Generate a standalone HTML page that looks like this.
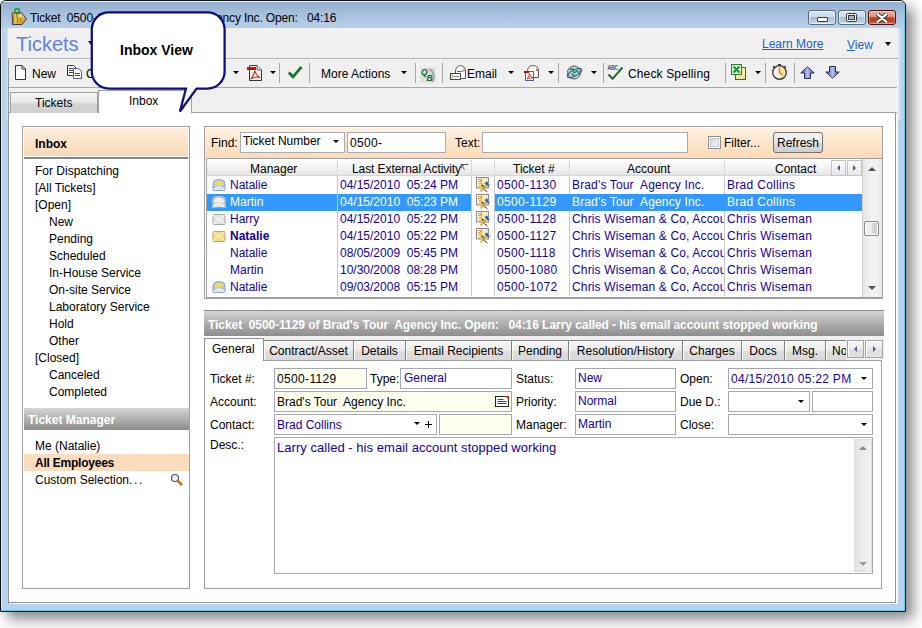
<!DOCTYPE html>
<html><head><meta charset="utf-8">
<style>
*{box-sizing:border-box;margin:0;padding:0}
html,body{width:922px;height:628px;overflow:hidden;background:#fff}
body{position:relative;font-family:"Liberation Sans",sans-serif;font-size:12px;color:#000}
.a{position:absolute}
svg{display:block}
.t{position:absolute;white-space:nowrap;line-height:14px}
#win{left:0;top:0;width:906px;height:612px;background:#b9d1ea;border:1px solid #101010;border-radius:6px 6px 0 0;overflow:hidden;box-shadow:7px 7px 14px rgba(0,0,0,.48)}
#title{left:0;top:0;width:904px;height:27px;border-top:1px solid #f4f8fc;background:linear-gradient(#94afcf,#a6bfdc 45%,#b9d0e9)}
#content{left:8px;top:28px;width:890px;height:576px;background:#fff;border-left:1px solid #8e969e;}
.hdr{left:8px;top:28px;width:890px;height:31px;background:#f0f0f0;border-bottom:1px solid #b4b4b4}
.tb{left:9px;top:59px;width:888px;height:29px;background:#f0f0f0;border-bottom:1px solid #a8a8a8}
.tabrow{left:9px;top:88px;width:888px;height:25px;background:#f0f0f0;border-bottom:1px solid #a0a0a0}
.sep{position:absolute;width:1px;height:20px;top:63px;background:#a9a9a9;border-right:1px solid #fff}
.dd{position:absolute;width:0;height:0;border-left:3px solid transparent;border-right:3px solid transparent;border-top:3px solid #000}
.blue{color:#19198c}
.box{position:absolute;border:1px solid #a0a0a0;background:#fff}
.field{position:absolute;border:1px solid #a5acb5;background:#fff;height:21px}
.yel{background:#fffff0}
</style></head><body>
<div id="win" class="a">
  <div id="title" class="a"></div>
  <div class="a" style="right:0;top:4px;width:1px;height:606px;background:#5cd0f0"></div>
  <div class="a" style="left:0;bottom:0;width:904px;height:1px;background:#5cd0f0"></div>
  <div class="a" style="left:0;top:27px;width:1px;height:580px;background:#dde9f5"></div>
  <div class="a" style="left:897px;top:27px;width:3px;height:92px;background:linear-gradient(90deg,rgba(255,255,255,.5),rgba(255,255,255,.15))"></div>
  <div class="a" style="left:3px;top:27px;width:4px;height:92px;background:linear-gradient(90deg,rgba(255,255,255,0),rgba(255,255,255,.35))"></div>
</div>
<!-- title -->
<div class="a" style="left:10px;top:7px;width:18px;height:19px">
<svg width="18" height="19" viewBox="0 0 18 19"><defs><linearGradient id="gld" x1="0" x2="1" y1="0" y2="1"><stop offset="0" stop-color="#f8e070"/><stop offset=".5" stop-color="#e8c040"/><stop offset="1" stop-color="#b88a18"/></linearGradient></defs>
<path d="M2 6 L11.5 5.5 L16.5 12 L12 17.5 L2.5 17.5 Z" fill="url(#gld)" stroke="#3a3a50" stroke-width="1"/>
<path d="M4 7 L3.5 16 M6.5 6.5 L8 16 M9 6 L11 15" stroke="#9a7010" stroke-width="1.1"/>
<circle cx="10" cy="9" r="1.3" fill="#fff"/>
<circle cx="7" cy="4" r="2.3" fill="none" stroke="#1a9a2a" stroke-width="1.6"/></svg>
</div>
<div class="t" style="left:30px;top:11px;font-size:12px;letter-spacing:-0.17px;color:#000">Ticket&nbsp; 0500-1129 of Brad's Tour&nbsp; Agency Inc. Open:&nbsp;&nbsp; 04:16</div>
<!-- window buttons -->
<div class="a" style="left:808px;top:10px;width:28px;height:15px;border:1px solid #5c6a7e;border-radius:3px;background:linear-gradient(#dbe6f2,#ccdaea 45%,#a9bfd8 50%,#b8cce2 80%,#cfe0f0);box-shadow:inset 0 0 0 1px rgba(255,255,255,.55)"><div class="a" style="left:8px;top:6px;width:11px;height:5px;border:1px solid #3a3a3a;border-radius:1px;background:#fff"></div></div>
<div class="a" style="left:838px;top:10px;width:28px;height:15px;border:1px solid #5c6a7e;border-radius:3px;background:linear-gradient(#dbe6f2,#ccdaea 45%,#a9bfd8 50%,#b8cce2 80%,#cfe0f0);box-shadow:inset 0 0 0 1px rgba(255,255,255,.55)"><div class="a" style="left:7px;top:2px;width:11px;height:9px;border:1px solid #3a3a3a;border-radius:1.5px;background:#fafafa"><div class="a" style="left:1px;top:1px;width:7px;height:5px;border:1px solid #3a3a3a;background:#9fb4cc"></div></div></div>
<div class="a" style="left:868px;top:10px;width:28px;height:15px;border:1px solid #4a0f10;border-radius:3px;background:linear-gradient(#eab0a0,#e09080 45%,#c84a28 50%,#b83818 75%,#d87050);box-shadow:inset 0 0 0 1px rgba(255,255,255,.35)">
<svg class="a" style="left:7px;top:2px" width="12" height="10"><path d="M1.5 1.2 L10.5 8.8 M10.5 1.2 L1.5 8.8" stroke="#3a3030" stroke-width="4.2" stroke-linecap="round"/><path d="M1.5 1.2 L10.5 8.8 M10.5 1.2 L1.5 8.8" stroke="#fafafa" stroke-width="2.4" stroke-linecap="round"/></svg></div>

<!-- content -->
<div id="content" class="a"></div>
<div class="a hdr"></div>
<div class="t" style="left:16px;top:33px;font-size:20px;line-height:22px;color:#5f80e4">Tickets</div>
<div class="dd" style="left:88px;top:41px;border-width:4px 3px 0 3px"></div>
<div class="t" style="left:762px;top:37px;color:#1c5fc9;text-decoration:underline">Learn More</div>
<div class="t" style="left:847px;top:38px;color:#1c5fc9"><span style="text-decoration:underline">V</span>iew</div>
<div class="dd" style="left:885px;top:42px;border-width:4px 3px 0 3px"></div>

<!-- toolbar -->
<div class="a tb"></div>
<div class="a" style="left:15px;top:65px;width:11px;height:15px"><svg width="11" height="15" viewBox="0 0 11 15"><path d="M0.5 0.5 H7 L10.5 4 V14.5 H0.5 Z" fill="#fff" stroke="#333"/><path d="M7 0.5 V4 H10.5" fill="none" stroke="#333"/></svg></div>
<div class="t" style="left:32px;top:67px">New</div>
<div class="a" style="left:67px;top:65px;width:16px;height:15px"><svg width="16" height="15" viewBox="0 0 16 15"><path d="M0.5 0.5 H6.5 L9 3 V10.5 H0.5 Z" fill="#fff" stroke="#333"/><path d="M2 3.5h4M2 5.5h5M2 7.5h5" stroke="#444"/><path d="M6.5 3.5 H11.5 L14.5 6.5 V13.5 H6.5 Z" fill="#fff" stroke="#5a5a9a"/><path d="M8 8.5h5M8 10.5h5" stroke="#444"/></svg></div>
<div class="t" style="left:86px;top:67px">C</div>
<div class="a" style="left:233px;top:71px;width:0;height:0;border-left:3px solid transparent;border-right:3px solid transparent;border-top:3px solid #000"></div>
<div class="a" style="left:246px;top:64px;width:17px;height:18px"><svg width="17" height="18" viewBox="0 0 17 18"><path d="M3.5 1.5 H11 L15.5 6 V16.5 H3.5 Z" fill="#fff" stroke="#333"/><path d="M11 1.5 V6 H15.5" fill="#ddd" stroke="#666"/><rect x="4" y="7" width="11" height="9" fill="#e8f4e8"/><rect x="1" y="3" width="9" height="3" fill="#e00000"/><path d="M5 15 C7 12 8.5 9 9 6.5 C9.5 9 11 12 14 13.5 C11 12.5 8 13 5 15 Z" fill="none" stroke="#e02020" stroke-width="1.1"/></svg></div>
<div class="a" style="left:270px;top:71px;width:0;height:0;border-left:3px solid transparent;border-right:3px solid transparent;border-top:3px solid #000"></div>
<div class="a" style="left:279px;top:63px;width:1px;height:20px;background:#a6a6a6"></div>
<div class="a" style="left:287px;top:65px;width:16px;height:14px"><svg width="16" height="14" viewBox="0 0 16 14"><path d="M1.8 7.5 L6 11.8 L14.5 1.8" fill="none" stroke="#16782a" stroke-width="2.8"/></svg></div>
<div class="a" style="left:309px;top:63px;width:1px;height:20px;background:#a6a6a6"></div>
<div class="t" style="left:321px;top:67px">More Actions</div>
<div class="a" style="left:401px;top:71px;width:0;height:0;border-left:3px solid transparent;border-right:3px solid transparent;border-top:3px solid #000"></div>
<div class="a" style="left:415px;top:63px;width:1px;height:20px;background:#a6a6a6"></div>
<div class="a" style="left:420px;top:67px;width:16px;height:16px"><svg width="16" height="16" viewBox="0 0 16 16"><rect x="0" y="0" width="16" height="16" fill="#dedede"/><rect x="0.5" y="0.5" width="15" height="15" fill="none" stroke="#e8e8e8"/><path d="M9 2 C14 4 15.5 11 11.5 15" stroke="#a8a8a8" stroke-width="2" fill="none"/><text x="1" y="8" font-family="Liberation Sans" font-style="italic" font-weight="bold" font-size="8.5" fill="#0a6a30">Q</text><text x="6.5" y="14" font-family="Liberation Sans" font-style="italic" font-weight="bold" font-size="8.5" fill="#0a6a30">B</text></svg></div>
<div class="a" style="left:442px;top:63px;width:1px;height:20px;background:#a6a6a6"></div>
<div class="a" style="left:450px;top:64px;width:17px;height:17px"><svg width="17" height="17" viewBox="0 0 17 17"><path d="M5.5 14.5 V7 Q6 2 10.5 1.5 Q15 2 15.5 7 V14.5 Z" fill="#fff" stroke="#555"/><path d="M7 7.5h5" stroke="#5a5aa0"/><rect x="12.5" y="5.5" width="2" height="2" fill="#e06020"/><rect x="0.5" y="9.5" width="10" height="6" fill="#fff" stroke="#444"/><rect x="1.5" y="10.5" width="2" height="4" fill="#9ad09a"/><path d="M4 12.5h5" stroke="#888"/></svg></div>
<div class="t" style="left:467px;top:67px">Email</div>
<div class="a" style="left:508px;top:71px;width:0;height:0;border-left:3px solid transparent;border-right:3px solid transparent;border-top:3px solid #000"></div>
<div class="a" style="left:523px;top:64px;width:17px;height:17px"><svg width="17" height="17" viewBox="0 0 17 17"><path d="M4.5 13.5 V6.5 Q5 2 10 1.5 Q15 2 15.5 6.5 V13.5 Z" fill="#fff" stroke="#555"/><rect x="13" y="5" width="2" height="2" fill="#e07030"/><rect x="2.5" y="7.5" width="8" height="9" fill="#fff" stroke="#5a5a9a"/><rect x="1" y="7" width="5" height="2" fill="#e00000"/><path d="M4 15 C5.5 13 6.5 11 6.5 9.5 C7 11.5 8 13 10 14 C8 13.5 6 14 4 15 Z" fill="none" stroke="#e02020" stroke-width="1"/></svg></div>
<div class="a" style="left:548px;top:71px;width:0;height:0;border-left:3px solid transparent;border-right:3px solid transparent;border-top:3px solid #000"></div>
<div class="a" style="left:558px;top:63px;width:1px;height:20px;background:#a6a6a6"></div>
<div class="a" style="left:566px;top:65px;width:17px;height:15px"><svg width="17" height="15" viewBox="0 0 17 15"><circle cx="8" cy="7.5" r="6.5" fill="#b8d8f0" stroke="#555" stroke-width="1"/><path d="M4 5 C6 3 8 4 7.5 6 C7 8 9 8 10 6.5 C11 5 12.5 6 12 8 M5 10 C6 9 8 10 9 11" fill="none" stroke="#2a9a3a" stroke-width="1.6"/><ellipse cx="8.5" cy="8" rx="8" ry="3" transform="rotate(-28 8.5 8)" fill="none" stroke="#3a4aa0" stroke-width="1"/></svg></div>
<div class="a" style="left:591px;top:71px;width:0;height:0;border-left:3px solid transparent;border-right:3px solid transparent;border-top:3px solid #000"></div>
<div class="a" style="left:603px;top:63px;width:1px;height:20px;background:#a6a6a6"></div>
<div class="a" style="left:606px;top:64px;width:18px;height:17px"><svg width="18" height="17" viewBox="0 0 18 17"><text x="1.5" y="5.8" font-family="Liberation Mono" font-size="6.3" fill="#222" letter-spacing="-0.3">ABC</text><path d="M2.5 10.5 L6.5 14.8 L16.5 3.5" fill="none" stroke="#1a6e2c" stroke-width="2"/></svg></div>
<div class="t" style="left:628px;top:67px;letter-spacing:0.14px">Check Spelling</div>
<div class="a" style="left:725px;top:63px;width:1px;height:20px;background:#a6a6a6"></div>
<div class="a" style="left:731px;top:64px;width:16px;height:17px"><svg width="16" height="17" viewBox="0 0 16 17"><rect x="4.5" y="3.5" width="10" height="12" fill="#fbf0a8" stroke="#555"/><path d="M5 12h9M5 14h9" stroke="#e8d880" stroke-width="0.8"/><rect x="0.5" y="0.5" width="10" height="10" fill="#dff0d8" stroke="#2a7a3a"/><path d="M2.5 2.5 L8.5 8.5 M8.5 2.5 L2.5 8.5" stroke="#1a8a2a" stroke-width="1.8"/></svg></div>
<div class="a" style="left:755px;top:71px;width:0;height:0;border-left:3px solid transparent;border-right:3px solid transparent;border-top:3px solid #000"></div>
<div class="a" style="left:765px;top:63px;width:1px;height:20px;background:#a6a6a6"></div>
<div class="a" style="left:771px;top:63px;width:17px;height:18px"><svg width="17" height="18" viewBox="0 0 17 18"><path d="M8.5 9.5 V3 A6.5 6.5 0 0 1 8.5 16 Z" fill="#fbe6a0"/><circle cx="8.5" cy="9.5" r="6.8" fill="none" stroke="#333" stroke-width="1.3"/><path d="M8.5 4.5 V9.5 L11.5 12" fill="none" stroke="#e07a10" stroke-width="1.4"/><path d="M7 1.5 H10 M8.5 1.5 V3 M2 4.5 L3.5 3 M15 4.5 L13.5 3" stroke="#333" stroke-width="1.2"/></svg></div>
<div class="a" style="left:794px;top:63px;width:1px;height:20px;background:#a6a6a6"></div>
<div class="a" style="left:800px;top:66px;width:15px;height:13px"><svg width="15" height="13" viewBox="0 0 15 13"><defs><linearGradient id="ag" x1="0" x2="1" y1="0" y2="0"><stop offset="0" stop-color="#3a4690"/><stop offset=".5" stop-color="#b8c0ec"/><stop offset="1" stop-color="#4a56a0"/></linearGradient></defs><path d="M7.5 0.8 L14.2 7 H10.5 V12.5 H4.5 V7 H0.8 Z" fill="url(#ag)" stroke="#2a2f60" stroke-width="1"/></svg></div>
<div class="a" style="left:825px;top:66px;width:15px;height:13px"><svg width="15" height="13" viewBox="0 0 15 13"><path d="M7.5 12.2 L14.2 6 H10.5 V0.5 H4.5 V6 H0.8 Z" fill="url(#ag)" stroke="#2a2f60" stroke-width="1"/></svg></div>

<!-- tab row -->
<div class="a tabrow"></div>
<div class="a" style="left:10px;top:92px;width:88px;height:21px;border:1px solid #a0a0a0;border-bottom:none;background:linear-gradient(#f5f5f5,#e8e8e8 45%,#d4d4d4 55%,#cfcfcf)"></div>
<div class="t" style="left:35px;top:96px">Tickets</div>
<div class="a" style="left:98px;top:90px;width:94px;height:23px;border:1px solid #a0a0a0;border-bottom:none;background:#fff"></div>
<div class="t" style="left:129px;top:94px">Inbox</div>

<!-- main white -->
<div class="a" style="left:9px;top:113px;width:887px;height:490px;background:#fff;border-bottom:1px solid #8e969e;border-right:1px solid #8e969e"></div>

<!-- left panel -->
<div class="box" style="left:22px;top:126px;width:168px;height:463px"></div>
<div class="a" style="left:24px;top:128px;width:164px;height:28px;background:linear-gradient(#fdeedd,#f9d9b6)"></div>
<div class="a" style="left:24px;top:157px;width:164px;height:2px;background:#858585"></div>
<div class="t" style="left:35px;top:137px;font-weight:bold">Inbox</div>
<div class="t" style="left:35px;top:164px">For Dispatching</div>
<div class="t" style="left:35px;top:181px">[All Tickets]</div>
<div class="t" style="left:35px;top:198px">[Open]</div>
<div class="t" style="left:49px;top:215px">New</div>
<div class="t" style="left:49px;top:232px">Pending</div>
<div class="t" style="left:49px;top:249px">Scheduled</div>
<div class="t" style="left:49px;top:266px">In-House Service</div>
<div class="t" style="left:49px;top:283px">On-site Service</div>
<div class="t" style="left:49px;top:300px">Laboratory Service</div>
<div class="t" style="left:49px;top:317px">Hold</div>
<div class="t" style="left:49px;top:334px">Other</div>
<div class="t" style="left:35px;top:351px">[Closed]</div>
<div class="t" style="left:49px;top:368px">Canceled</div>
<div class="t" style="left:49px;top:385px">Completed</div>
<div class="a" style="left:24px;top:408px;width:165px;height:22px;background:linear-gradient(#d6d6d6,#8c8c8c)"></div>
<div class="t" style="left:28px;top:413px;font-weight:bold;color:#fff">Ticket Manager</div>
<div class="t" style="left:35px;top:439px">Me (Natalie)</div>
<div class="a" style="left:24px;top:454px;width:165px;height:17px;background:#fbdcbd"></div>
<div class="t" style="left:35px;top:456px;font-weight:bold;letter-spacing:-0.23px">All Employees</div>
<div class="t" style="left:35px;top:473px">Custom Selection<span style="letter-spacing:1.6px">..</span>.</div>
<div class="a" style="left:170px;top:473px;width:14px;height:14px">
<svg width="14" height="14"><circle cx="5" cy="5" r="3.5" fill="#eef" stroke="#555" stroke-width="1.2"/><path d="M7.5 7.5 L12 12" stroke="#c07010" stroke-width="2.5"/></svg></div>


<!-- right panel: find + grid -->
<div class="box" style="left:204px;top:126px;width:679px;height:173px"></div>
<div class="a" style="left:205px;top:128px;width:677px;height:30px;background:linear-gradient(#fff1e0,#fcdab6)"></div>
<div class="t" style="left:211px;top:136px">Find:</div>
<div class="a" style="left:240px;top:132px;width:105px;height:21px;border:1px solid #a5acb5;background:#fff"></div>
<div class="t" style="left:243px;top:134px">Ticket Number</div>
<div class="dd" style="left:333px;top:140px"></div>
<div class="a" style="left:347px;top:132px;width:99px;height:21px;border:1px solid #a5acb5;background:#fff"></div>
<div class="t" style="left:350px;top:136px;letter-spacing:0.3px">0500-</div>
<div class="t" style="left:455px;top:136px">Text:</div>
<div class="a" style="left:482px;top:132px;width:206px;height:21px;border:1px solid #a5acb5;background:#fff"></div>
<div class="a" style="left:708px;top:136px;width:13px;height:13px;border:1px solid #8f8f8f;background:#fff"><div class="a" style="left:1px;top:1px;width:9px;height:9px;border:1px solid #c4c8d0;background:linear-gradient(135deg,#d0d4dc,#f6f6f6)"></div></div>
<div class="t" style="left:724px;top:136px">Filter...</div>
<div class="a" style="left:773px;top:132px;width:50px;height:21px;border:1px solid #707070;border-radius:3px;background:linear-gradient(#f2f2f2,#ebebeb 50%,#dddddd 51%,#cfcfcf)"></div>
<div class="t" style="left:777px;top:136px">Refresh</div>

<div class="a" style="left:206px;top:158px;width:676px;height:140px;border:1px solid #a0a0a0;border-right:none;background:#fff"></div>
<div class="a" style="left:207px;top:159px;width:656px;height:17px;background:linear-gradient(#ffffff,#f4f4f4 50%,#e6e6e6);border-bottom:1px solid #d5d5d5"></div>
<div class="t" style="left:250px;top:162px;line-height:14px">Manager</div>
<div class="t" style="left:352px;top:162px;line-height:14px;letter-spacing:-0.08px">Last External Activity</div>
<div class="a" style="left:460px;top:164px;width:9px;height:7px"><svg width="9" height="7"><path d="M0.5 0.5 H8 M1.5 1.5 L4.5 5.5 M1.2 1.2 V4 M1.2 1.2 H4" fill="none" stroke="#555" stroke-width="1"/></svg></div>
<div class="t" style="left:513px;top:162px;line-height:14px">Ticket #</div>
<div class="t" style="left:627px;top:162px;line-height:14px">Account</div>
<div class="t" style="left:775px;top:162px;line-height:14px">Contact</div>
<div class="a" style="left:337px;top:160px;width:1px;height:16px;background:#d8d8d8"></div>
<div class="a" style="left:337px;top:176px;width:1px;height:120px;background:#c8c8c8"></div>
<div class="a" style="left:471px;top:160px;width:1px;height:16px;background:#d8d8d8"></div>
<div class="a" style="left:471px;top:176px;width:1px;height:120px;background:#c8c8c8"></div>
<div class="a" style="left:494px;top:160px;width:1px;height:16px;background:#d8d8d8"></div>
<div class="a" style="left:494px;top:176px;width:1px;height:120px;background:#c8c8c8"></div>
<div class="a" style="left:569px;top:160px;width:1px;height:16px;background:#d8d8d8"></div>
<div class="a" style="left:569px;top:176px;width:1px;height:120px;background:#c8c8c8"></div>
<div class="a" style="left:724px;top:160px;width:1px;height:16px;background:#d8d8d8"></div>
<div class="a" style="left:724px;top:176px;width:1px;height:120px;background:#c8c8c8"></div>
<div class="a" style="left:831px;top:160px;width:15px;height:16px;border:1px solid #c4c4c4;background:linear-gradient(#fdfdfd,#e8e8e8)"><div class="a" style="left:5px;top:4px;border-top:3px solid transparent;border-bottom:3px solid transparent;border-right:3px solid #4a5a9a"></div></div>
<div class="a" style="left:847px;top:160px;width:15px;height:16px;border:1px solid #c4c4c4;background:linear-gradient(#fdfdfd,#e8e8e8)"><div class="a" style="left:5px;top:4px;border-top:3px solid transparent;border-bottom:3px solid transparent;border-left:3px solid #4a5a9a"></div></div>
<div class="a" style="left:862px;top:159px;width:20px;height:138px;background:linear-gradient(90deg,#e6e6e6,#f2f2f2 40%,#f2f2f2 70%,#e8e8e8);border-left:1px solid #d0d0d0"></div>
<div class="a" style="left:868px;top:167px;width:0;height:0;border-left:4px solid transparent;border-right:4px solid transparent;border-bottom:4px solid #555"></div>
<div class="a" style="left:868px;top:286px;width:0;height:0;border-left:4px solid transparent;border-right:4px solid transparent;border-top:4px solid #555"></div>
<div class="a" style="left:864px;top:221px;width:15px;height:15px;border:1px solid #8a8a8a;border-radius:2px;box-shadow:inset 0 0 0 1px #fff;background:linear-gradient(90deg,#f4f4f4,#ececec 50%,#dcdcdc 51%,#c8c8d0)"></div>
<div class="a" style="left:212px;top:179px;width:14px;height:12px"><svg width="14" height="12"><path d="M1 11.5 V5 Q1 1 5 0.8 H9 Q13 1 13 5 V11.5 Z" fill="#a6c6ec" stroke="#8ea4c4"/><path d="M2.5 6.5 V3.5 Q3 2 5 2 H9 Q11 2 11.5 3.5 V6.5 Z" fill="#f6d66a"/><path d="M1.5 11 Q7 4.5 12.5 11" fill="#cfe4fa" stroke="#f4f8ff" stroke-width="1.2"/></svg></div>
<div class="t" style="left:230px;top:177px;line-height:17px;color:#14009a;">Natalie</div>
<div class="t" style="left:340px;top:177px;line-height:17px;color:#14009a">04/15/2010&nbsp; 05:24 PM</div>
<div class="a" style="left:476px;top:177px;width:15px;height:16px"><svg width="15" height="16"><defs><linearGradient id="tg" x1="0" x2="1" y1="0" y2="1"><stop offset="0" stop-color="#fffbe8"/><stop offset="1" stop-color="#f6dc70"/></linearGradient></defs><rect x="0.5" y="0.5" width="12" height="10.5" fill="url(#tg)" stroke="#8a8a9a"/><path d="M2 2.5 H4.5 V4.5 H2 M5.5 1 V5.5 M3 6.5 H5.5 V9 H3" fill="none" stroke="#e8a040" stroke-width="1"/><path d="M6 8 L9 11" stroke="#333" stroke-width="1.2"/><path d="M4.5 14.5 L10.5 7.5" stroke="#f0a818" stroke-width="1.8"/><path d="M7.5 12 L11.5 15" stroke="#444" stroke-width="1"/><path d="M8.5 6 L11 4.5 L14 8 L12 9.5 Z" fill="#2a5ad0"/><path d="M12 6.5 L14 8" stroke="#a0c8f0" stroke-width="1"/></svg></div>
<div class="t" style="left:497px;top:177px;line-height:17px;letter-spacing:0.35px;color:#14009a">0500-1130</div>
<div class="a" style="left:572px;top:177px;width:152px;height:17px;overflow:hidden"><div class="t" style="left:0;top:0;line-height:17px;letter-spacing:0.15px;color:#14009a">Brad's Tour&nbsp; Agency Inc.</div></div>
<div class="t" style="left:727px;top:177px;line-height:17px;letter-spacing:0.3px;color:#14009a">Brad Collins</div>
<div class="a" style="left:207px;top:194px;width:130px;height:17px;background:#3399ff"></div>
<div class="a" style="left:338px;top:194px;width:133px;height:17px;background:#3399ff"></div>
<div class="a" style="left:495px;top:194px;width:367px;height:17px;background:#3399ff"></div>
<div class="a" style="left:212px;top:196px;width:14px;height:12px"><svg width="14" height="12"><path d="M1 11.5 V5 Q1 1 5 0.8 H9 Q13 1 13 5 V11.5 Z" fill="#d4d4d4" stroke="#f8f8f8" stroke-width="1.4"/><path d="M1 11.5 V5 Q1 1 5 0.8 H9 Q13 1 13 5 V11.5 Z" fill="none" stroke="#8a8a8a" stroke-width="0.8"/><path d="M2.5 6.5 V3.5 Q3 2 5 2 H9 Q11 2 11.5 3.5 V6.5 Z" fill="#efefef"/><path d="M1.5 11 Q7 4.5 12.5 11" fill="#e4e4e4" stroke="#fff" stroke-width="1.2"/></svg></div>
<div class="t" style="left:230px;top:194px;line-height:17px;color:#fff;">Martin</div>
<div class="t" style="left:340px;top:194px;line-height:17px;color:#fff">04/15/2010&nbsp; 05:23 PM</div>
<div class="a" style="left:476px;top:194px;width:15px;height:16px"><svg width="15" height="16"><defs><linearGradient id="tg" x1="0" x2="1" y1="0" y2="1"><stop offset="0" stop-color="#fffbe8"/><stop offset="1" stop-color="#f6dc70"/></linearGradient></defs><rect x="0.5" y="0.5" width="12" height="10.5" fill="url(#tg)" stroke="#8a8a9a"/><path d="M2 2.5 H4.5 V4.5 H2 M5.5 1 V5.5 M3 6.5 H5.5 V9 H3" fill="none" stroke="#e8a040" stroke-width="1"/><path d="M6 8 L9 11" stroke="#333" stroke-width="1.2"/><path d="M4.5 14.5 L10.5 7.5" stroke="#f0a818" stroke-width="1.8"/><path d="M7.5 12 L11.5 15" stroke="#444" stroke-width="1"/><path d="M8.5 6 L11 4.5 L14 8 L12 9.5 Z" fill="#2a5ad0"/><path d="M12 6.5 L14 8" stroke="#a0c8f0" stroke-width="1"/></svg></div>
<div class="t" style="left:497px;top:194px;line-height:17px;letter-spacing:0.35px;color:#fff">0500-1129</div>
<div class="a" style="left:572px;top:194px;width:152px;height:17px;overflow:hidden"><div class="t" style="left:0;top:0;line-height:17px;letter-spacing:0.15px;color:#fff">Brad's Tour&nbsp; Agency Inc.</div></div>
<div class="t" style="left:727px;top:194px;line-height:17px;letter-spacing:0.3px;color:#fff">Brad Collins</div>
<div class="a" style="left:212px;top:213px;width:14px;height:12px"><svg width="14" height="12"><rect x="1" y="1.5" width="12" height="10" rx="0.8" fill="#e2e2e2" stroke="#a8a8a8"/><path d="M1.5 2 L7 7 L12.5 2 M1.5 11 L5.5 6.5 M12.5 11 L8.5 6.5" fill="none" stroke="#f8f8f8" stroke-width="1.1"/></svg></div>
<div class="t" style="left:230px;top:211px;line-height:17px;color:#14009a;">Harry</div>
<div class="t" style="left:340px;top:211px;line-height:17px;color:#14009a">04/15/2010&nbsp; 05:22 PM</div>
<div class="a" style="left:476px;top:211px;width:15px;height:16px"><svg width="15" height="16"><defs><linearGradient id="tg" x1="0" x2="1" y1="0" y2="1"><stop offset="0" stop-color="#fffbe8"/><stop offset="1" stop-color="#f6dc70"/></linearGradient></defs><rect x="0.5" y="0.5" width="12" height="10.5" fill="url(#tg)" stroke="#8a8a9a"/><path d="M2 2.5 H4.5 V4.5 H2 M5.5 1 V5.5 M3 6.5 H5.5 V9 H3" fill="none" stroke="#e8a040" stroke-width="1"/><path d="M6 8 L9 11" stroke="#333" stroke-width="1.2"/><path d="M4.5 14.5 L10.5 7.5" stroke="#f0a818" stroke-width="1.8"/><path d="M7.5 12 L11.5 15" stroke="#444" stroke-width="1"/><path d="M8.5 6 L11 4.5 L14 8 L12 9.5 Z" fill="#2a5ad0"/><path d="M12 6.5 L14 8" stroke="#a0c8f0" stroke-width="1"/></svg></div>
<div class="t" style="left:497px;top:211px;line-height:17px;letter-spacing:0.35px;color:#14009a">0500-1128</div>
<div class="a" style="left:572px;top:211px;width:152px;height:17px;overflow:hidden"><div class="t" style="left:0;top:0;line-height:17px;letter-spacing:0.15px;color:#14009a">Chris Wiseman &amp; Co, Accou</div></div>
<div class="t" style="left:727px;top:211px;line-height:17px;letter-spacing:0.3px;color:#14009a">Chris Wiseman</div>
<div class="a" style="left:212px;top:230px;width:14px;height:12px"><svg width="14" height="12"><rect x="1" y="1.5" width="12" height="10" rx="0.8" fill="#f6dc80" stroke="#c4a460"/><path d="M1.5 2 L7 7 L12.5 2 M1.5 11 L5.5 6.5 M12.5 11 L8.5 6.5" fill="none" stroke="#fcf0c0" stroke-width="1.1"/></svg></div>
<div class="t" style="left:230px;top:228px;line-height:17px;color:#14009a;font-weight:bold;">Natalie</div>
<div class="t" style="left:340px;top:228px;line-height:17px;color:#14009a">04/15/2010&nbsp; 05:22 PM</div>
<div class="a" style="left:476px;top:228px;width:15px;height:16px"><svg width="15" height="16"><defs><linearGradient id="tg" x1="0" x2="1" y1="0" y2="1"><stop offset="0" stop-color="#fffbe8"/><stop offset="1" stop-color="#f6dc70"/></linearGradient></defs><rect x="0.5" y="0.5" width="12" height="10.5" fill="url(#tg)" stroke="#8a8a9a"/><path d="M2 2.5 H4.5 V4.5 H2 M5.5 1 V5.5 M3 6.5 H5.5 V9 H3" fill="none" stroke="#e8a040" stroke-width="1"/><path d="M6 8 L9 11" stroke="#333" stroke-width="1.2"/><path d="M4.5 14.5 L10.5 7.5" stroke="#f0a818" stroke-width="1.8"/><path d="M7.5 12 L11.5 15" stroke="#444" stroke-width="1"/><path d="M8.5 6 L11 4.5 L14 8 L12 9.5 Z" fill="#2a5ad0"/><path d="M12 6.5 L14 8" stroke="#a0c8f0" stroke-width="1"/></svg></div>
<div class="t" style="left:497px;top:228px;line-height:17px;letter-spacing:0.35px;color:#14009a">0500-1127</div>
<div class="a" style="left:572px;top:228px;width:152px;height:17px;overflow:hidden"><div class="t" style="left:0;top:0;line-height:17px;letter-spacing:0.15px;color:#14009a">Chris Wiseman &amp; Co, Accou</div></div>
<div class="t" style="left:727px;top:228px;line-height:17px;letter-spacing:0.3px;color:#14009a">Chris Wiseman</div>
<div class="t" style="left:230px;top:245px;line-height:17px;color:#14009a;">Natalie</div>
<div class="t" style="left:340px;top:245px;line-height:17px;color:#14009a">08/05/2009&nbsp; 05:45 PM</div>
<div class="t" style="left:497px;top:245px;line-height:17px;letter-spacing:0.35px;color:#14009a">0500-1118</div>
<div class="a" style="left:572px;top:245px;width:152px;height:17px;overflow:hidden"><div class="t" style="left:0;top:0;line-height:17px;letter-spacing:0.15px;color:#14009a">Chris Wiseman &amp; Co, Accou</div></div>
<div class="t" style="left:727px;top:245px;line-height:17px;letter-spacing:0.3px;color:#14009a">Chris Wiseman</div>
<div class="t" style="left:230px;top:262px;line-height:17px;color:#14009a;">Martin</div>
<div class="t" style="left:340px;top:262px;line-height:17px;color:#14009a">10/30/2008&nbsp; 08:28 PM</div>
<div class="t" style="left:497px;top:262px;line-height:17px;letter-spacing:0.35px;color:#14009a">0500-1080</div>
<div class="a" style="left:572px;top:262px;width:152px;height:17px;overflow:hidden"><div class="t" style="left:0;top:0;line-height:17px;letter-spacing:0.15px;color:#14009a">Chris Wiseman &amp; Co, Accou</div></div>
<div class="t" style="left:727px;top:262px;line-height:17px;letter-spacing:0.3px;color:#14009a">Chris Wiseman</div>
<div class="a" style="left:212px;top:281px;width:14px;height:12px"><svg width="14" height="12"><path d="M1 11.5 V5 Q1 1 5 0.8 H9 Q13 1 13 5 V11.5 Z" fill="#a6c6ec" stroke="#8ea4c4"/><path d="M2.5 6.5 V3.5 Q3 2 5 2 H9 Q11 2 11.5 3.5 V6.5 Z" fill="#f6d66a"/><path d="M1.5 11 Q7 4.5 12.5 11" fill="#cfe4fa" stroke="#f4f8ff" stroke-width="1.2"/></svg></div>
<div class="t" style="left:230px;top:279px;line-height:17px;color:#14009a;">Natalie</div>
<div class="t" style="left:340px;top:279px;line-height:17px;color:#14009a">09/03/2008&nbsp; 05:15 PM</div>
<div class="t" style="left:497px;top:279px;line-height:17px;letter-spacing:0.35px;color:#14009a">0500-1072</div>
<div class="a" style="left:572px;top:279px;width:152px;height:17px;overflow:hidden"><div class="t" style="left:0;top:0;line-height:17px;letter-spacing:0.15px;color:#14009a">Chris Wiseman &amp; Co, Accou</div></div>
<div class="t" style="left:727px;top:279px;line-height:17px;letter-spacing:0.3px;color:#14009a">Chris Wiseman</div>
<div class="a" style="left:204px;top:310px;width:680px;height:26px;border-top:1px solid #8c8c8c;background:linear-gradient(#d4d4d4,#a8a8a8 60%,#8e8e8e)"></div>
<div class="t" style="left:208px;top:318px;font-weight:bold;letter-spacing:-0.055px;color:#fff">Ticket&nbsp; 0500-1129 of Brad's Tour&nbsp; Agency Inc. Open:&nbsp;&nbsp; 04:16 Larry called - his email account stopped working</div>
<div class="box" style="left:204px;top:360px;width:678px;height:229px"></div>
<div class="a" style="left:264px;top:336px;width:620px;height:24px;background:#f0f0f0"></div>
<div class="a" style="left:263px;top:340px;width:91px;height:21px;border:1px solid #808080;border-bottom:1px solid #a0a0a0;background:linear-gradient(#f6f6f6,#ececec 50%,#dedede 55%,#d8d8d8);box-shadow:inset 1px 1px 0 #fff"></div>
<div class="a" style="left:353px;top:340px;width:53px;height:21px;border:1px solid #808080;border-bottom:1px solid #a0a0a0;background:linear-gradient(#f6f6f6,#ececec 50%,#dedede 55%,#d8d8d8);box-shadow:inset 1px 1px 0 #fff"></div>
<div class="a" style="left:405px;top:340px;width:107px;height:21px;border:1px solid #808080;border-bottom:1px solid #a0a0a0;background:linear-gradient(#f6f6f6,#ececec 50%,#dedede 55%,#d8d8d8);box-shadow:inset 1px 1px 0 #fff"></div>
<div class="a" style="left:511px;top:340px;width:58px;height:21px;border:1px solid #808080;border-bottom:1px solid #a0a0a0;background:linear-gradient(#f6f6f6,#ececec 50%,#dedede 55%,#d8d8d8);box-shadow:inset 1px 1px 0 #fff"></div>
<div class="a" style="left:568px;top:340px;width:115px;height:21px;border:1px solid #808080;border-bottom:1px solid #a0a0a0;background:linear-gradient(#f6f6f6,#ececec 50%,#dedede 55%,#d8d8d8);box-shadow:inset 1px 1px 0 #fff"></div>
<div class="a" style="left:682px;top:340px;width:60px;height:21px;border:1px solid #808080;border-bottom:1px solid #a0a0a0;background:linear-gradient(#f6f6f6,#ececec 50%,#dedede 55%,#d8d8d8);box-shadow:inset 1px 1px 0 #fff"></div>
<div class="a" style="left:741px;top:340px;width:44px;height:21px;border:1px solid #808080;border-bottom:1px solid #a0a0a0;background:linear-gradient(#f6f6f6,#ececec 50%,#dedede 55%,#d8d8d8);box-shadow:inset 1px 1px 0 #fff"></div>
<div class="a" style="left:784px;top:340px;width:42px;height:21px;border:1px solid #808080;border-bottom:1px solid #a0a0a0;background:linear-gradient(#f6f6f6,#ececec 50%,#dedede 55%,#d8d8d8);box-shadow:inset 1px 1px 0 #fff"></div>
<div class="a" style="left:825px;top:340px;width:36px;height:21px;border:1px solid #808080;border-bottom:1px solid #a0a0a0;background:linear-gradient(#f6f6f6,#ececec 50%,#dedede 55%,#d8d8d8);box-shadow:inset 1px 1px 0 #fff"></div>
<div class="t" style="left:263px;top:344px;width:91px;text-align:center">Contract/Asset</div>
<div class="t" style="left:353px;top:344px;width:53px;text-align:center">Details</div>
<div class="t" style="left:405px;top:344px;width:107px;text-align:center">Email Recipients</div>
<div class="t" style="left:511px;top:344px;width:58px;text-align:center">Pending</div>
<div class="t" style="left:568px;top:344px;width:115px;text-align:center">Resolution/History</div>
<div class="t" style="left:682px;top:344px;width:60px;text-align:center">Charges</div>
<div class="t" style="left:741px;top:344px;width:44px;text-align:center">Docs</div>
<div class="t" style="left:784px;top:344px;width:42px;text-align:center">Msg.</div>
<div class="t" style="left:832px;top:344px">No</div>
<div class="a" style="left:204px;top:338px;width:60px;height:23px;border:1px solid #8f8f8f;border-bottom:none;background:#fff"></div>
<div class="t" style="left:212px;top:342px">General</div>
<div class="a" style="left:846px;top:338px;width:38px;height:22px;background:#f0f0f0"></div>
<div class="a" style="left:847px;top:340px;width:17px;height:18px;border:1px solid #a4a4ac;box-shadow:inset 1px 1px 0 #fff;background:linear-gradient(#f4f4f4,#ececec 50%,#dedede 55%,#e2e2e2)"><div class="a" style="left:6px;top:5px;border-top:3px solid transparent;border-bottom:3px solid transparent;border-right:3px solid #4a5a9a"></div></div>
<div class="a" style="left:865px;top:340px;width:18px;height:18px;border:1px solid #a4a4ac;box-shadow:inset 1px 1px 0 #fff;background:linear-gradient(#f4f4f4,#ececec 50%,#dedede 55%,#e2e2e2)"><div class="a" style="left:7px;top:5px;border-top:3px solid transparent;border-bottom:3px solid transparent;border-left:3px solid #4a5a9a"></div></div>
<div class="t" style="left:210px;top:372px">Ticket #:</div>
<div class="t" style="left:210px;top:395px">Account:</div>
<div class="t" style="left:210px;top:418px">Contact:</div>
<div class="t" style="left:210px;top:438px">Desc.:</div>
<div class="t" style="left:370px;top:372px">Type:</div>
<div class="t" style="left:516px;top:372px">Status:</div>
<div class="t" style="left:516px;top:395px">Priority:</div>
<div class="t" style="left:516px;top:418px">Manager:</div>
<div class="t" style="left:680px;top:372px">Open:</div>
<div class="t" style="left:680px;top:395px">Due D.:</div>
<div class="t" style="left:680px;top:418px">Close:</div>
<div class="a" style="left:274px;top:368px;width:93px;height:21px;border:1px solid #a5a8b0;background:#fffff0"></div>
<div class="a" style="left:400px;top:368px;width:112px;height:21px;border:1px solid #a5a8b0;background:#fff"></div>
<div class="a" style="left:274px;top:391px;width:238px;height:21px;border:1px solid #a5a8b0;background:#fffff0"></div>
<div class="a" style="left:274px;top:414px;width:163px;height:21px;border:1px solid #a5a8b0;background:#fff"></div>
<div class="a" style="left:439px;top:414px;width:73px;height:21px;border:1px solid #a5a8b0;background:#fffff0"></div>
<div class="a" style="left:575px;top:368px;width:101px;height:21px;border:1px solid #a5a8b0;background:#fff"></div>
<div class="a" style="left:575px;top:391px;width:101px;height:21px;border:1px solid #a5a8b0;background:#fff"></div>
<div class="a" style="left:575px;top:414px;width:101px;height:21px;border:1px solid #a5a8b0;background:#fff"></div>
<div class="a" style="left:728px;top:368px;width:145px;height:21px;border:1px solid #a5a8b0;background:#fff"></div>
<div class="a" style="left:728px;top:391px;width:82px;height:21px;border:1px solid #a5a8b0;background:#fff"></div>
<div class="a" style="left:812px;top:391px;width:61px;height:21px;border:1px solid #a5a8b0;background:#fff"></div>
<div class="a" style="left:728px;top:414px;width:145px;height:21px;border:1px solid #a5a8b0;background:#fff"></div>
<div class="a" style="left:274px;top:437px;width:599px;height:137px;border:1px solid #a5a8b0;background:#fff"></div>
<div class="t" style="left:277px;top:372px;letter-spacing:0.35px">0500-1129</div>
<div class="t" style="left:404px;top:371px;color:#14009a">General</div>
<div class="t" style="left:277px;top:395px">Brad's Tour&nbsp; Agency Inc.</div>
<div class="t" style="left:277px;top:418px;color:#14009a">Brad Collins</div>
<div class="t" style="left:578px;top:371px;color:#14009a">New</div>
<div class="t" style="left:578px;top:394px;color:#14009a">Normal</div>
<div class="t" style="left:578px;top:417px;color:#14009a">Martin</div>
<div class="t" style="left:731px;top:372px;letter-spacing:0.3px;color:#14009a">04/15/2010 05:22 PM</div>
<div class="t" style="left:277px;top:441px;font-size:13px;letter-spacing:0.04px;color:#14009a">Larry called - his email account stopped working</div>
<div class="dd" style="left:861px;top:377px"></div>
<div class="dd" style="left:798px;top:400px"></div>
<div class="dd" style="left:861px;top:423px"></div>
<div class="dd" style="left:414px;top:422px"></div>
<div class="a" style="left:425px;top:424px;width:7px;height:1.2px;background:#000"></div><div class="a" style="left:428px;top:421px;width:1.2px;height:7px;background:#000"></div>
<div class="a" style="left:495px;top:396px;width:14px;height:11px"><svg width="14" height="11"><rect x="0.5" y="0.5" width="13" height="10" fill="#fff" stroke="#222"/><path d="M2.5 3.5h6M2.5 5.5h9M2.5 7.5h9" stroke="#444"/><path d="M10 0 H14 V4 Z" fill="#e02020"/></svg></div>
<div class="a" style="left:854px;top:439px;width:18px;height:133px;border:1px solid #dcdcdc;background:linear-gradient(90deg,#e2e2e2,#ececec 50%,#f2f2f2)"></div>
<div class="a" style="left:859px;top:446px;width:0;height:0;border-left:4px solid transparent;border-right:4px solid transparent;border-bottom:4px solid #8a8a8a"></div>
<div class="a" style="left:859px;top:562px;width:0;height:0;border-left:4px solid transparent;border-right:4px solid transparent;border-top:4px solid #9a9a9a"></div>
<div class="a" style="left:88px;top:9px;width:142px;height:106px">
<svg width="142" height="106"><path d="M20.8 3.4 H119.6 A17 17 0 0 1 136.6 20.4 V62.5 A17 17 0 0 1 119.6 79.5 H108.6 L91.9 102.5 L98 79.5 H20.8 A17 17 0 0 1 3.8 62.5 V20.4 A17 17 0 0 1 20.8 3.4 Z" fill="#fff" stroke="#0e0e80" stroke-width="2.25" stroke-linejoin="miter"/></svg></div>
<div class="t" style="left:120px;top:42px;font-size:14px;line-height:16px;font-weight:bold">Inbox View</div>
</body></html>
